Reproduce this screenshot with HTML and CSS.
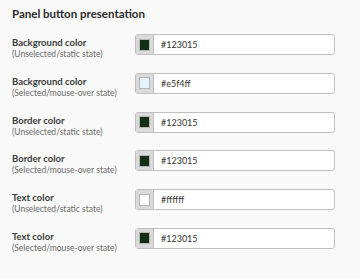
FILE: index.html
```html
<!DOCTYPE html>
<html lang="en">
<head>
  <meta charset="UTF-8" />
  <title>Panel button presentation</title>
  <link rel="stylesheet" href="styles.css">
</head>
<body>
  <div class="panel">
    <h2>Panel button presentation</h2>
    <div class="row">
      <div class="label"><b>Background color</b><span>(Unselected/static state)</span></div>
      <div class="picker"><div class="swatch"><i class="dark"></i></div><div class="hex">#123015</div></div>
    </div>
    <div class="row">
      <div class="label"><b>Background color</b><span>(Selected/mouse-over state)</span></div>
      <div class="picker"><div class="swatch"><i class="light"></i></div><div class="hex">#e5f4ff</div></div>
    </div>
    <div class="row">
      <div class="label"><b>Border color</b><span>(Unselected/static state)</span></div>
      <div class="picker"><div class="swatch"><i class="dark"></i></div><div class="hex">#123015</div></div>
    </div>
    <div class="row">
      <div class="label"><b>Border color</b><span>(Selected/mouse-over state)</span></div>
      <div class="picker"><div class="swatch"><i class="dark"></i></div><div class="hex">#123015</div></div>
    </div>
    <div class="row">
      <div class="label"><b>Text color</b><span>(Unselected/static state)</span></div>
      <div class="picker"><div class="swatch"><i class="white"></i></div><div class="hex">#ffffff</div></div>
    </div>
    <div class="row">
      <div class="label"><b>Text color</b><span>(Selected/mouse-over state)</span></div>
      <div class="picker"><div class="swatch"><i class="dark"></i></div><div class="hex">#123015</div></div>
    </div>
  </div>
</body>
</html>
```

FILE: styles.css
```css
* {
  box-sizing: border-box;
  font-family: 'Lato', sans-serif;
}
body {
  margin: 0;
  background: #f9f9f9;
  color: #333;
}
.panel {
  padding: 6px 12px 0 12px;
}
h2 {
  margin: 0 0 12px 0;
  font-size: 11.5px;
  line-height: 16px;
  font-weight: 700;
  color: #2b2b2b;
}
.row {
  display: flex;
  align-items: flex-start;
  height: 38.8px;
}
.label {
  width: 123px;
  display: flex;
  flex-direction: column;
  padding-top: 3px;
}
.label b {
  font-size: 9.5px;
  line-height: 12px;
  color: #3a3a3a;
}
.label span {
  font-size: 8.5px;
  line-height: 11px;
  color: #6a6a6a;
}
.picker {
  display: flex;
  width: 200px;
  height: 21px;
  border: 1px solid #bfbfbf;
  border-radius: 3px;
  background: #fff;
  overflow: hidden;
}
.swatch {
  width: 18px;
  background: #dadada;
  border-right: 1px solid #bfbfbf;
  display: flex;
  align-items: center;
  justify-content: center;
}
.swatch i {
  width: 11px;
  height: 12px;
  border: 1px solid #b4b4b4;
}
.dark { background: #123015; }
.light { background: #e5f4ff; }
.white { background: #fff; }
.hex {
  padding-left: 7px;
  font-size: 9px;
  line-height: 19px;
  color: #333;
}
```
